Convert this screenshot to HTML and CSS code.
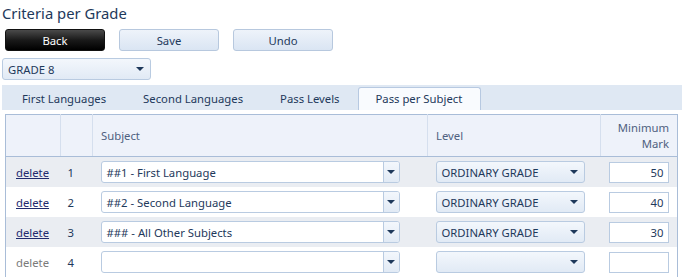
FILE: index.html
```html
<!DOCTYPE html>
<html lang="en">
<head>
    <meta charset="UTF-8">
    <title>Criteria per Grade</title>
    <link rel="stylesheet" href="styles.css">
</head>
<body>

<h1 class="page-title">Criteria per Grade</h1>

<!-- Top buttons -->
<div class="toolbar">
    <button class="btn btn-dark">Back</button>
    <button class="btn">Save</button>
    <button class="btn">Undo</button>
</div>

<div class="combo grade-combo">
    <span class="combo-text">GRADE 8</span>
    <span class="combo-arrow"></span>
</div>

<!-- Tabs -->
<div class="tabs">
    <div class="tab">First Languages</div>
    <div class="tab">Second Languages</div>
    <div class="tab">Pass Levels</div>
    <div class="tab active">Pass per Subject</div>
</div>

<table class="grid">
    <colgroup>
        <col class="col-del">
        <col class="col-num">
        <col class="col-subject">
        <col class="col-level">
        <col class="col-mark">
    </colgroup>
    <thead>
        <tr>
            <th></th>
            <th></th>
            <th>Subject</th>
            <th>Level</th>
            <th class="th-mark">Minimum<br>Mark</th>
        </tr>
    </thead>
    <tbody>
        <tr class="alt">
            <td><a href="#" class="del">delete</a></td>
            <td>1</td>
            <td><div class="combo subject-combo"><span class="combo-text">##1 - First Language</span><span class="combo-btn"><span class="combo-arrow"></span></span></div></td>
            <td><div class="combo level-combo"><span class="combo-text">ORDINARY GRADE</span><span class="combo-arrow"></span></div></td>
            <td><div class="mark">50</div></td>
        </tr>
        <tr>
            <td><a href="#" class="del">delete</a></td>
            <td>2</td>
            <td><div class="combo subject-combo"><span class="combo-text">##2 - Second Language</span><span class="combo-btn"><span class="combo-arrow"></span></span></div></td>
            <td><div class="combo level-combo"><span class="combo-text">ORDINARY GRADE</span><span class="combo-arrow"></span></div></td>
            <td><div class="mark">40</div></td>
        </tr>
        <tr class="alt">
            <td><a href="#" class="del">delete</a></td>
            <td>3</td>
            <td><div class="combo subject-combo"><span class="combo-text">### - All Other Subjects</span><span class="combo-btn"><span class="combo-arrow"></span></span></div></td>
            <td><div class="combo level-combo"><span class="combo-text">ORDINARY GRADE</span><span class="combo-arrow"></span></div></td>
            <td><div class="mark">30</div></td>
        </tr>
        <tr>
            <td><span class="del disabled">delete</span></td>
            <td>4</td>
            <td><div class="combo subject-combo"><span class="combo-text"></span><span class="combo-btn"><span class="combo-arrow"></span></span></div></td>
            <td><div class="combo level-combo"><span class="combo-text"></span><span class="combo-arrow"></span></div></td>
            <td><div class="mark"></div></td>
        </tr>
    </tbody>
</table>

</body>
</html>
```

FILE: styles.css
```css
body {
    margin: 0;
    font-family: 'Noto Sans', 'Open Sans', sans-serif;
    font-size: 11.3px;
    color: #1e395b;
    background: #fff;
}
.page-title {
    margin: 0;
    padding: 2px 0 0 2px;
    height: 27px;
    box-sizing: border-box;
    font-size: 14.8px;
    font-weight: normal;
    line-height: 22px;
    color: #1e395b;
}
.toolbar {
    display: flex;
    padding-left: 5px;
    gap: 14px;
    margin-top: 2px;
}
.btn {
    width: 100px;
    height: 22px;
    padding: 0;
    font-family: inherit;
    font-size: 11.3px;
    color: #1e395b;
    border: 1px solid #b7c8de;
    border-radius: 3px;
    background: linear-gradient(#eef3fa, #dae5f3);
}
.btn-dark {
    color: #fff;
    border-color: #111;
    background: linear-gradient(#4a4a4a, #1a1a1a 50%, #000);
}
.combo {
    display: flex;
    align-items: center;
    box-sizing: border-box;
    height: 22px;
    border: 1px solid #b9cbe1;
    border-radius: 3px;
    background: linear-gradient(#f3f7fc, #e1eaf5);
}
.combo-text {
    flex: 1;
    padding-left: 5px;
    white-space: nowrap;
}
.combo-arrow {
    width: 0;
    height: 0;
    margin-right: 6px;
    border-left: 4px solid transparent;
    border-right: 4px solid transparent;
    border-top: 4px solid #1e395b;
}
.grade-combo {
    width: 149px;
    margin: 7px 0 0 2px;
}
.tabs {
    display: flex;
    align-items: flex-end;
    height: 25px;
    margin: 5px 0 0 2px;
    padding-left: 2px;
    background: #dfe8f3;
}
.tab {
    height: 23px;
    line-height: 21px;
    padding: 0 17px;
    margin-right: 1px;
    box-sizing: border-box;
    border: 1px solid transparent;
    border-bottom: none;
}
.tab.active {
    padding: 0 18px 0 16px;
    background: #f9fbfe;
    border-color: #b7c9e1;
    border-radius: 3px 3px 0 0;
}
.grid {
    margin: 4px 0 0 5px;
    width: 672px;
    border-collapse: collapse;
    border: 1px solid #a9bdd8;
    table-layout: fixed;
}
.col-del { width: 55px; }
.col-num { width: 32px; }
.col-subject { width: 335px; }
.col-level { width: 173px; }
.col-mark { width: 77px; }
.grid th {
    height: 41px;
    background: #eef2fa;
    font-weight: normal;
    color: #4f6180;
    text-align: left;
    padding: 0 8px;
    border-left: 1px solid #d5dfee;
    border-bottom: 1px solid #a9bdd8;
    line-height: 16px;
}
.grid th:first-child {
    border-left: none;
}
.grid .th-mark {
    text-align: right;
}
.grid td {
    height: 30px;
    padding: 0 8px;
    white-space: nowrap;
}
.grid td:first-child {
    padding-left: 10px;
}
.grid td:nth-child(2) {
    padding-left: 7px;
}
.grid tr.alt td {
    background: #eaedf2;
}
.del {
    color: #1f2a6e;
    text-decoration: underline;
}
.del.disabled {
    color: #7a7a7a;
    text-decoration: none;
}
.subject-combo {
    width: 299px;
    background: #fff;
}
.combo-btn {
    display: flex;
    align-items: center;
    justify-content: center;
    width: 15px;
    height: 100%;
    border-left: 1px solid #b9cbe1;
    background: linear-gradient(#f3f7fc, #e1eaf5);
    border-radius: 0 2px 2px 0;
}
.combo-btn .combo-arrow {
    margin-right: 0;
}
.level-combo {
    width: 149px;
}
.mark {
    box-sizing: border-box;
    width: 60px;
    height: 21px;
    line-height: 19px;
    padding-right: 4px;
    text-align: right;
    border: 1px solid #b9cbe1;
    background: #fff;
}
```
